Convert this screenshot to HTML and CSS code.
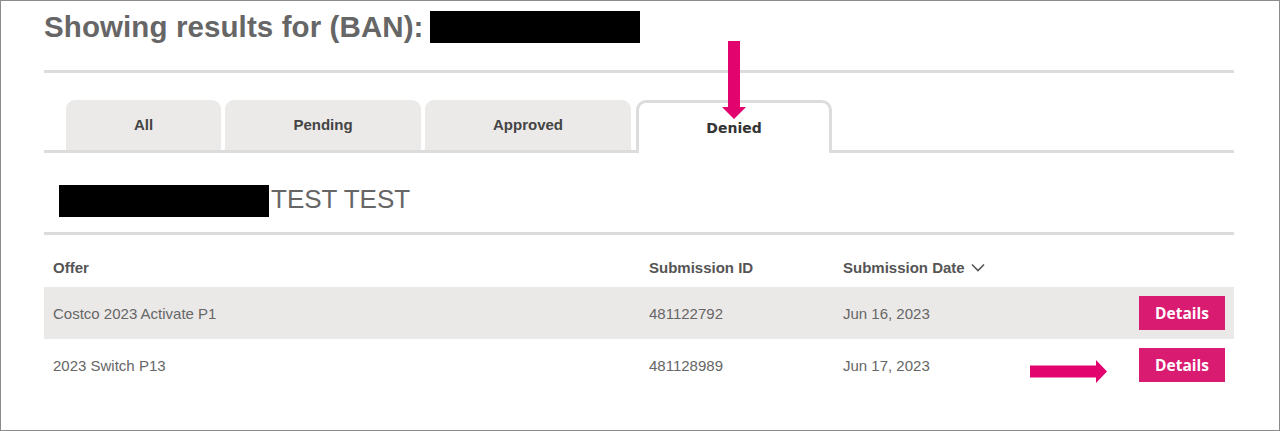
FILE: index.html
```html
<!DOCTYPE html>
<html lang="en">
<head>
<meta charset="utf-8">
<title>Showing results</title>
<link rel="stylesheet" href="styles.css">
</head>
<body>
<div class="frame">
  <div class="content">
    <div class="title-row">
      <h1 class="title">Showing results for (BAN):</h1>
      <span class="redact redact-ban"></span>
    </div>
    <div class="rule rule-top"></div>
    <nav class="tabs">
      <div class="tab tab-all">All</div>
      <div class="tab tab-pending">Pending</div>
      <div class="tab tab-approved">Approved</div>
      <div class="tab tab-denied active">Denied</div>
    </nav>
    <div class="name-row">
      <span class="redact redact-name"></span>
      <span class="name">TEST TEST</span>
    </div>
    <div class="rule rule-name"></div>
    <div class="table">
      <div class="row head">
        <div class="cell">Offer</div>
        <div class="cell">Submission ID</div>
        <div class="cell">Submission Date
          <svg class="chev" width="14" height="9" viewBox="0 0 14 9"><path d="M1 1.5 L7 7.5 L13 1.5" fill="none" stroke="#555" stroke-width="1.6"/></svg>
        </div>
        <div class="cell"></div>
      </div>
      <div class="row shaded">
        <div class="cell">Costco 2023 Activate P1</div>
        <div class="cell">481122792</div>
        <div class="cell">Jun 16, 2023</div>
        <div class="cell"><button class="btn">Details</button></div>
      </div>
      <div class="row">
        <div class="cell">2023 Switch P13</div>
        <div class="cell">481128989</div>
        <div class="cell">Jun 17, 2023</div>
        <div class="cell"><button class="btn">Details</button></div>
      </div>
    </div>
  </div>
  <svg class="arrow arrow-down" width="24" height="78" viewBox="0 0 24 78"><path d="M6 0 H18 V66 H24 L12 78 L0 66 H6 Z" fill="#e2036f"/></svg>
  <svg class="arrow arrow-right" width="77" height="23" viewBox="0 0 77 23"><path d="M0 5.5 H66 V0 L77 11.5 L66 23 V17.5 H0 Z" fill="#e2036f"/></svg>
</div>
</body>
</html>
```

FILE: styles.css
```css
* { box-sizing: border-box; }
html, body { margin: 0; padding: 0; background: #fff; }
body { font-family: "Liberation Sans", Arial, sans-serif; color: #666; }

.frame {
  position: relative;
  width: 1280px;
  height: 431px;
  border: 1px solid #8c8c8c;
  overflow: hidden;
}
.content {
  width: 1233px;
  padding: 10px 0 0 43px;
}
.title-row {
  display: flex;
  align-items: center;
  height: 32px;
  gap: 6px;
}
.title {
  margin: 0;
  font-size: 29.5px;
  line-height: 32px;
  font-weight: bold;
  color: #666;
  letter-spacing: 0.1px;
}
.redact { display: inline-block; background: #000; }
.redact-ban { width: 210px; height: 32px; }
.redact-name { width: 210px; height: 32px; }

.rule { height: 3px; background: #dcdcdc; }
.rule-top { margin-top: 27px; }

.tabs {
  display: flex;
  align-items: flex-end;
  margin-top: 27px;
  padding-left: 22px;
  border-bottom: 3px solid #dcdcdc;
  height: 53px;
}
.tab {
  height: 50px;
  margin-right: 4px;
  background: #ebeae9;
  border-radius: 9px 9px 0 0;
  display: flex;
  align-items: center;
  justify-content: center;
  font-weight: bold;
  font-size: 15px;
  color: #444;
  padding-bottom: 1px;
}
.tab-all { width: 155px; }
.tab-pending { width: 196px; }
.tab-approved { width: 206px; margin-right: 5px; }
.tab-denied { width: 196px; }
.tab.active {
  background: #fff;
  border: 3px solid #dcdcdc;
  border-bottom: none;
  height: 53px;
  margin-bottom: -3px;
  padding-top: 0;
  padding-bottom: 0;
  border-radius: 10px 10px 0 0;
  font-family: "DejaVu Sans", Verdana, sans-serif;
  font-size: 14px;
  color: #333;
}

.name-row {
  display: flex;
  align-items: center;
  margin-top: 32px;
  padding-left: 15px;
  height: 32px;
}
.name {
  font-size: 26px;
  color: #666;
  margin-left: 2px;
  padding-bottom: 4px;
}
.rule-name { margin-top: 15px; }

.row {
  display: grid;
  grid-template-columns: 596px 194px 1fr auto;
  align-items: center;
  height: 52px;
  padding: 0 9px;
  font-size: 15px;
  color: #666;
}
.row.head {
  font-weight: bold;
  color: #555;
  padding-top: 12px;
}
.row.shaded { background: #ebe9e8; }
.chev { margin-left: 2px; vertical-align: 1px; }

.btn {
  width: 86px;
  height: 34px;
  border: none;
  background: #d91b72;
  color: #fff;
  font-family: "Open Sans", "Segoe UI", sans-serif;
  font-weight: bold;
  font-size: 15.5px;
  padding: 0;
  display: block;
}

.arrow { position: absolute; }
.arrow-down { left: 721px; top: 40px; }
.arrow-right { left: 1029px; top: 359px; }
```
